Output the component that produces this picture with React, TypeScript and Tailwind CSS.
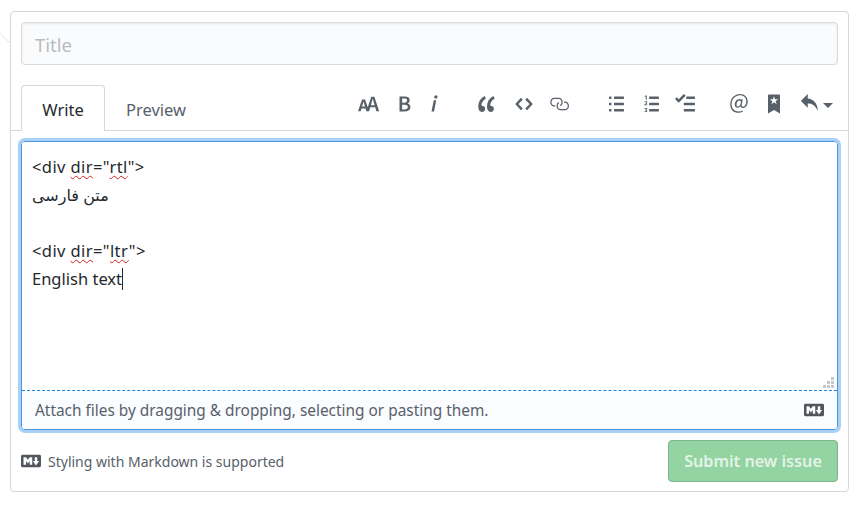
import React from 'react';

type IconProps = { d: string; vb: string; className: string };

function Octicon({ d, vb, className }: IconProps) {
  return (
    <svg viewBox={vb} className={className} fill="currentColor" preserveAspectRatio="xMidYMid meet" aria-hidden="true">
      <path fillRule="evenodd" d={d} />
    </svg>
  );
}

const MARKDOWN =
  'M14.85 3H1.15C.52 3 0 3.52 0 4.15v7.69C0 12.48.52 13 1.15 13h13.69c.64 0 1.15-.52 1.15-1.15v-7.7C16 3.52 15.48 3 14.85 3zM9 11H7V8L5.5 9.92 4 8v3H2V5h2l1.5 2L7 5h2v6zm2.99.5L9.5 8H11V5h2v3h1.5l-2.51 3.5z';

function OrderedList({ className }: { className: string }) {
  return (
    <svg viewBox="0 0 12 16" className={className} fill="currentColor" aria-hidden="true">
      <rect x="4" y="2" width="8" height="2" rx="0.6" />
      <rect x="4" y="7" width="8" height="2" rx="0.6" />
      <rect x="4" y="12" width="8" height="2" rx="0.6" />
      <path d="M1.2 1.2h1v3.4h-.8V2c-.3.1-.5.2-.8.2v-.6c.2 0 .4-.2.6-.4z" />
      <path d="M.4 6.2c.6-.5 2.2-.6 2.2.5 0 .8-.9 1.1-1.3 1.7h1.4V9H.3v-.6c.5-.8 1.5-1.2 1.5-1.7 0-.4-.8-.3-1.3 0z" />
      <path d="M.4 11.2h2.1v.5l-.8.8c.6 0 1 .3 1 .9 0 1-1.5 1.2-2.3.7v-.6c.5.3 1.5.4 1.5-.1 0-.3-.4-.4-1-.4v-.5l.8-.8H.4z" />
    </svg>
  );
}

function Toolbar() {
  return (
    <div className="flex items-center text-[#586069] h-5 mb-[16px]">
      <Octicon className="w-[22px] h-5" vb="0 0 18 16" d="M13.62 9.08L12.1 3.66h-.06l-1.5 5.42h3.08zM5.7 10.13S4.68 6.52 4.53 6.02h-.08l-1.13 4.11H5.7zM17.31 14h-2.25l-.95-3.25h-4.07L9.09 14H6.84l-.69-2.33H2.87L2.17 14H0l3.3-9.59h2.5l2.17 6.34L10.86 2h2.52l3.94 12h-.01z" />
      <Octicon className="w-[13px] h-5 ml-[18px]" vb="0 0 10 16" d="M1 2h3.83c2.48 0 4.3.75 4.3 2.95 0 1.14-.63 2.23-1.67 2.61v.06c1.33.3 2.3 1.23 2.3 2.86 0 2.39-1.97 3.52-4.61 3.52H1V2zm3.66 4.95c1.67 0 2.38-.66 2.38-1.69 0-1.17-.78-1.61-2.34-1.61H3.13v3.3h1.53zm.27 5.39c1.77 0 2.75-.64 2.75-1.98 0-1.27-.95-1.81-2.75-1.81h-1.8v3.8h1.8v-.01z" />
      <Octicon className="w-[8px] h-5 ml-[19px]" vb="0 0 6 16" d="M2.81 5h1.98L3 14H1l1.81-9zm.36-2.7c0-.7.58-1.3 1.33-1.3.74 0 1.33.6 1.33 1.3 0 .7-.58 1.3-1.33 1.3-.75 0-1.33-.6-1.33-1.3z" />
      <Octicon className="w-[18px] h-5 ml-[40px]" vb="0 0 14 16" d="M6.16 3.5C3.73 5.06 2.55 6.67 2.55 9.36c.16-.05.3-.05.44-.05 1.27 0 2.5.86 2.5 2.41 0 1.61-1.03 2.61-2.5 2.61-1.9 0-2.99-1.52-2.99-4.25 0-3.8 1.75-6.53 5.02-8.42L6.16 3.5zm7 0c-2.43 1.56-3.61 3.17-3.61 5.86.16-.05.3-.05.44-.05 1.27 0 2.5.86 2.5 2.41 0 1.61-1.03 2.61-2.5 2.61-1.89 0-2.98-1.52-2.98-4.25 0-3.8 1.75-6.53 5.02-8.42l1.14 1.84h-.01z" />
      <Octicon className="w-[18px] h-5 ml-[19px]" vb="0 0 14 16" d="M9.5 3L8 4.5 11.5 8 8 11.5 9.5 13 14 8 9.5 3zm-5 0L0 8l4.5 5L6 11.5 2.5 8 6 4.5 4.5 3z" />
      <Octicon className="w-5 h-5 ml-[16px]" vb="0 0 16 16" d="M4 9h1v1H4c-1.5 0-3-1.69-3-3.5S2.55 3 4 3h4c1.45 0 3 1.69 3 3.5 0 1.41-.91 2.72-2 3.25V8.59c.58-.45 1-1.27 1-2.09C10 5.22 8.98 4 8 4H4c-.98 0-2 1.22-2 2.5S3 9 4 9zm9-3h-1v1h1c1 0 2 1.22 2 2.5S13.98 12 13 12H9c-.98 0-2-1.22-2-2.5 0-.83.42-1.64 1-2.09V6.25c-1.09.53-2 1.84-2 3.25C6 11.31 7.55 13 9 13h4c1.45 0 3-1.69 3-3.5S14.5 6 13 6z" />
      <Octicon className="w-[15px] h-5 ml-[40px]" vb="0 0 12 16" d="M2 13c0 .59 0 1-.59 1H.59C0 14 0 13.59 0 13c0-.59 0-1 .59-1h.81c.59 0 .59.41.59 1H2zm2.59-9h6.81c.59 0 .59-.41.59-1 0-.59 0-1-.59-1H4.59C4 2 4 2.41 4 3c0 .59 0 1 .59 1zM1.41 7H.59C0 7 0 7.41 0 8c0 .59 0 1 .59 1h.81c.59 0 .59-.41.59-1 0-.59 0-1-.59-1h.01zm0-5H.59C0 2 0 2.41 0 3c0 .59 0 1 .59 1h.81c.59 0 .59-.41.59-1 0-.59 0-1-.59-1h.01zm10 5H4.59C4 7 4 7.41 4 8c0 .59 0 1 .59 1h6.81c.59 0 .59-.41.59-1 0-.59 0-1-.59-1h.01zm0 5H4.59C4 12 4 12.41 4 13c0 .59 0 1 .59 1h6.81c.59 0 .59-.41.59-1 0-.59 0-1-.59-1h.01z" />
      <OrderedList className="w-[15px] h-5 ml-[20px]" />
      <Octicon className="w-5 h-5 ml-[16px]" vb="0 0 16 16" d="M15.41 9H7.59C7 9 7 8.59 7 8c0-.59 0-1 .59-1h7.81c.59 0 .59.41.59 1 0 .59 0 1-.59 1h.01zM9.59 4C9 4 9 3.59 9 3c0-.59 0-1 .59-1h5.81c.59 0 .59.41.59 1 0 .59 0 1-.59 1H9.59zM0 3.91l1.41-1.3L3 4.2 7.09 0 8.5 1.41 3 6.91l-3-3zM7.59 12h7.81c.59 0 .59.41.59 1 0 .59 0 1-.59 1H7.59C7 14 7 13.59 7 13c0-.59 0-1 .59-1z" />
      <Octicon className="w-[18px] h-5 ml-[35px]" vb="0 0 14 16" d="M6.58 15c1.25 0 2.52-.31 3.56-.94l-.42-.94c-.84.52-1.89.83-3.03.83-3.23 0-5.64-2.08-5.64-5.72 0-4.37 3.23-7.18 6.58-7.18 3.45 0 5.22 2.19 5.22 5.2 0 2.39-1.34 3.86-2.5 3.86-1.05 0-1.36-.73-1.05-2.19l.73-3.75H8.98l-.11.72c-.41-.63-.94-.83-1.56-.83-2.19 0-3.66 2.39-3.66 4.38 0 1.67.94 2.61 2.3 2.61.84 0 1.67-.53 2.3-1.25.11.94.94 1.45 1.98 1.45 1.67 0 3.77-1.67 3.77-5C14 2.61 11.59 0 7.83 0 3.66 0 0 3.33 0 8.33 0 12.71 2.92 15 6.58 15zm-.31-5c-.73 0-1.25-.41-1.25-1.45 0-1.67 1.05-3.34 2.2-3.34.84 0 1.25.52 1.25 1.25 0 1.05-.52 3.54-2.2 3.54z" />
      <Octicon className="w-[12px] h-5 ml-[20px]" vb="0 0 10 16" d="M9 0H1C.27 0 0 .27 0 1v15l5-3.09L10 16V1c0-.73-.27-1-1-1zm-.78 4.25L6.36 5.61l.72 2.16c.06.22-.02.28-.2.17L5 6.6 3.12 7.94c-.19.11-.25.05-.2-.17l.72-2.16-1.86-1.36c-.17-.16-.14-.23.09-.23l2.3-.03.7-2.16h.25l.7 2.16 2.3.03c.23 0 .27.08.09.23h.01z" />
      <Octicon className="w-[18px] h-5 ml-[20px]" vb="0 0 14 16" d="M6 3.5c3.92.44 8 3.125 8 10-2.312-5.062-4.75-6-8-6V11L.5 5.5 6 0v3.5z" />
      <span className="ml-[5px] mt-[2px] w-0 h-0 border-x-[5px] border-x-transparent border-t-[5px] border-t-[#586069]" />
    </div>
  );
}

function Spell({ children }: { children: React.ReactNode }) {
  return (
    <span className="underline decoration-wavy decoration-[#d02020] decoration-1 underline-offset-2">{children}</span>
  );
}

function Editor() {
  return (
    <div className="mt-[10px] h-[289px] flex flex-col rounded-[4px] border border-[#4a94e0] shadow-[0_0_0_3px_#a9d0f5]">
      <div className="relative flex-1 bg-white rounded-t-[3px] px-[10px] pt-[11px] text-[16.5px] leading-[28px] text-[#24292e]">
        <div className="tracking-[0.4px]">&lt;div <Spell>dir</Spell>="<Spell>rtl</Spell>"&gt;</div>
        <div dir="rtl" className="text-left w-fit text-[16px]">متن فارسی</div>
        <div>&nbsp;</div>
        <div className="tracking-[0.4px]">&lt;div <Spell>dir</Spell>="<Spell>ltr</Spell>"&gt;</div>
        <div className="flex items-center">
          English text<span className="w-px h-[22px] bg-[#24292e]" />
        </div>
        {/* resize grip */}
        <svg viewBox="0 0 11 11" className="absolute right-[3px] bottom-[2px] w-[11px] h-[11px]" fill="#c4c8cc" aria-hidden="true">
          <rect x="8" y="0" width="3" height="3" />
          <rect x="4" y="4" width="3" height="3" />
          <rect x="8" y="4" width="3" height="3" />
          <rect x="0" y="8" width="3" height="3" />
          <rect x="4" y="8" width="3" height="3" />
          <rect x="8" y="8" width="3" height="3" />
        </svg>
      </div>
      <div className="h-[39px] flex items-center justify-between bg-[#fafcff] border-t border-dashed border-[#2188d0] rounded-b-[3px] pl-[13px] pr-[13px] text-[15.4px] text-[#586069]">
        <span className="mt-[2px]">Attach files by dragging &amp; dropping, selecting or pasting them.</span>
        <Octicon className="w-5 h-5 text-[#50565c]" vb="0 0 16 16" d={MARKDOWN} />
      </div>
    </div>
  );
}

export default function App() {
  return (
    <div className="h-[516px] bg-white pt-[11px] pl-[10px] pr-[18px] font-['Noto_Sans','DejaVu_Sans',sans-serif]">
      <div className="relative h-[481px] rounded-[4px] border border-[#d8d8d8] bg-white">
        {/* speech bubble tail */}
        <svg viewBox="0 0 11 14" className="absolute left-[-11px] top-[21px] w-[11px] h-[14px]" fill="none" stroke="#e4e4e4" aria-hidden="true">
          <path d="M0 0L11 11" />
        </svg>

        <div className="px-[10px] pt-[10px]">
          <input
            placeholder="Title"
            className="block w-full h-[43px] px-[13px] pt-[1px] rounded-[4px] border border-[#d8dadc] bg-[#fafbfc] text-[18.5px] placeholder:text-[#b8bcc0] shadow-[inset_0_1px_2px_rgba(27,31,35,0.075)] outline-none"
          />
        </div>

        <div className="mt-[20px] flex items-end justify-between border-b border-[#d8d8d8] pl-[10px] pr-[15px] h-[46px]">
          <div className="flex items-end text-[16.5px]">
            <div className="h-[46px] w-[84px] -mb-px rounded-t-[4px] border border-b-0 border-[#d8d8d8] bg-white flex items-center justify-center pt-[3px] text-[#24292e]">
              Write
            </div>
            <div className="h-[46px] w-[82px] ml-[10px] -mb-px flex items-center justify-center pt-[4px] text-[#586069]">Preview</div>
          </div>
          <Toolbar />
        </div>

        <div className="px-[10px]">
          <Editor />
          <div className="mt-[10px] flex items-center justify-between">
            <div className="flex items-center text-[14px] text-[#586069]">
              <Octicon className="w-5 h-5 mr-[7px] text-[#50565c]" vb="0 0 16 16" d={MARKDOWN} />
              <span>Styling with Markdown is supported</span>
            </div>
            <button className="h-[42px] w-[170px] rounded-[4px] border border-[#7fb58d] bg-[#94d3a2] text-[16.2px] font-semibold text-[#e3f3e7]">
              Submit new issue
            </button>
          </div>
        </div>
      </div>
    </div>
  );
}
